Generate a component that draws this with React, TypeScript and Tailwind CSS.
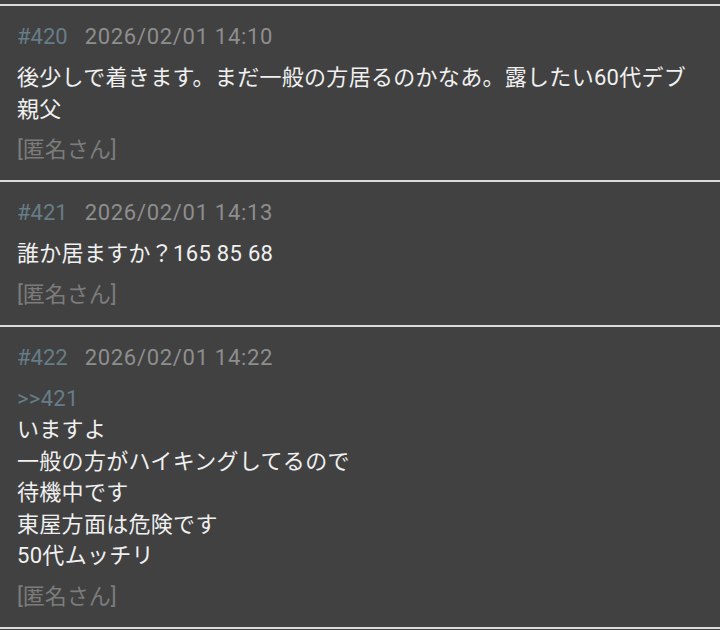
import React from 'react';

interface Post {
  no: number;
  date: string;
  anchor?: number;
  lines: string[];
}

const posts: Post[] = [
  {
    no: 420,
    date: '2026/02/01 14:10',
    lines: ['後少しで着きます。まだ一般の方居るのかなあ。露したい60代デブ親父'],
  },
  {
    no: 421,
    date: '2026/02/01 14:13',
    lines: ['誰か居ますか？165 85 68'],
  },
  {
    no: 422,
    date: '2026/02/01 14:22',
    anchor: 421,
    lines: ['いますよ', '一般の方がハイキングしてるので', '待機中です', '東屋方面は危険です', '50代ムッチリ'],
  },
];

function PostItem({ post }: { post: Post }) {
  return (
    <div className="border-t-2 border-[#dcdcdc] px-[17px] pt-[15px] pb-[14px]">
      {/* Header */}
      <div className="flex items-center gap-[17px] text-[22px] leading-[32px]">
        <span className="text-[#667d88]">#{post.no}</span>
        <span className="tracking-[0.7px] text-[#8e8e8e]">{post.date}</span>
      </div>

      {/* Body */}
      <div className="mt-[9px] text-[22px] leading-[31.5px] tracking-[0.3px] text-[#f0f0f0]">
        {post.anchor && <div className="text-[#667d88]">&gt;&gt;{post.anchor}</div>}
        {post.lines.map((line, i) => (
          <div key={i}>{line}</div>
        ))}
      </div>

      {/* Name */}
      <div className="mt-[9px] text-[22px] leading-[32px] text-[#7c7c7c]">[匿名さん]</div>
    </div>
  );
}

export default function App() {
  return (
    <div
      className="w-[720px] h-[630px] overflow-hidden bg-[#414141] pt-[4px]"
      style={{ fontFamily: 'Roboto, "Noto Sans CJK JP", sans-serif' }}
    >
      {posts.map((p) => (
        <PostItem key={p.no} post={p} />
      ))}
      <div className="border-t-2 border-[#dcdcdc]" />
    </div>
  );
}
